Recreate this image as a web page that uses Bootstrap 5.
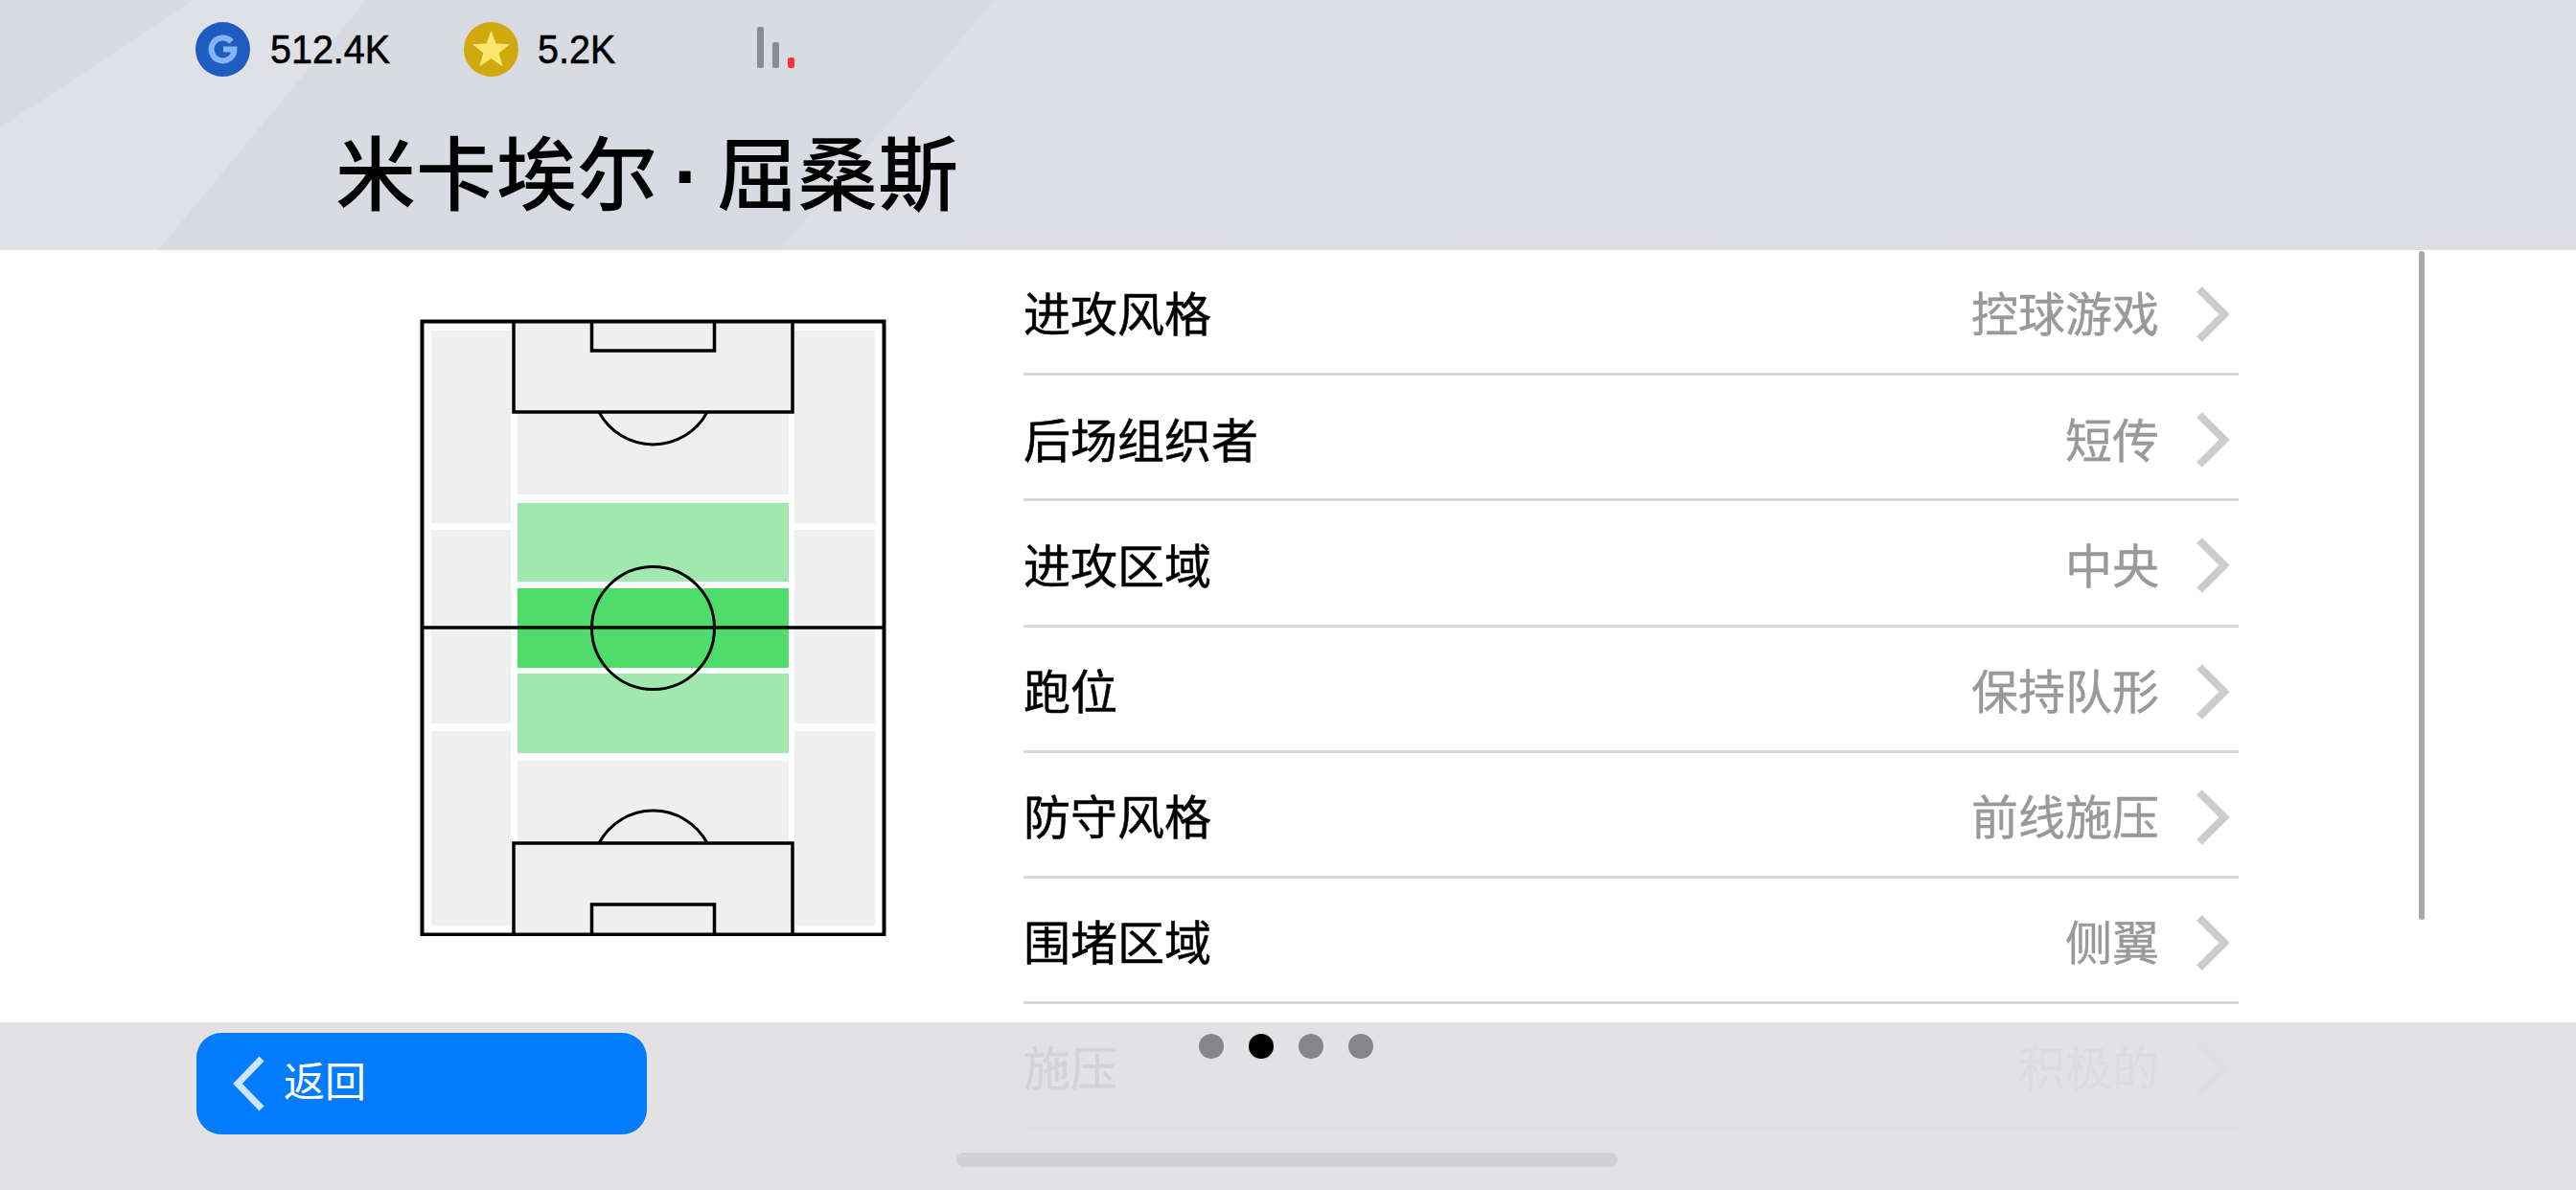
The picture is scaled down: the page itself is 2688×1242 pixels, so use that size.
<!DOCTYPE html>
<html lang="zh">
<head>
<meta charset="utf-8">
<title>米卡埃尔·屈桑斯</title>
<link href="https://cdn.jsdelivr.net/npm/bootstrap@5.3.0/dist/css/bootstrap.min.css" rel="stylesheet">
<style>
html,body{margin:0;height:1242px;overflow:hidden;background:#fff}
body{font-family:"Liberation Sans","Noto Sans CJK SC",sans-serif;color:#000}
.cjk{font-family:"Noto Sans CJK SC",sans-serif}
.screen{width:2688px;height:1242px;position:relative;overflow:hidden}
.topband{height:261px;background:linear-gradient(to bottom,#dedee7 0,#dedee7 240px,#dddee2 255px);position:relative;overflow:hidden}
.topband::before{content:"";position:absolute;inset:0;background:#d9dbe3;clip-path:polygon(0 0,1038px 0,814px 261px,0 261px)}
.topband::after{content:"";position:absolute;inset:0;background:#e0e1e6;clip-path:polygon(203px 0,382px 0,165px 261px,0 261px,0 133px)}
.topinner{position:relative;z-index:1;padding:23px 0 0 204px}
.stat-row{height:57px}
.coin{width:57px;height:57px;flex:none}
.stat-num{display:block;font-size:42px;line-height:57px;transform:scaleX(.94);transform-origin:left center;font-family:"Liberation Sans",sans-serif;-webkit-text-stroke:.6px #000}
.stat-a{width:280px;gap:21px}
.stat-b{width:306px;gap:20px}
.sig{height:43px;gap:9px;margin-top:5px}
.sig i{display:block;width:7px;border-radius:2px;background:#8b8c90}
.sig i:nth-child(1){height:43px}
.sig i:nth-child(2){height:27px}
.sig i:nth-child(3){height:11px;background:#f33}
.player{font-size:84px;line-height:100px;margin:47px 0 0 146px;font-weight:500;white-space:nowrap}
.namedot{display:inline-block;width:62px;text-align:center;font-family:"Liberation Sans",sans-serif;font-weight:700}
.bodyarea{height:806px}
.pitchcol{width:1068px;flex:none;padding:71px 0 0 438px}
.pitchcol svg{display:block}
.rows{width:1268px;flex:none}
.rowline{height:131.2px;border-bottom:3px solid #d9d9d9;font-size:49px}
.rowlabel{-webkit-text-stroke:.5px #000}
.rowval{color:#999;margin-left:auto;margin-right:37px;-webkit-text-stroke:.4px #999}
.rowline svg{margin:6px 10px 0 0;flex:none}
.scrolly{position:absolute;left:2524px;top:262px;width:6px;height:698px;background:#a8a8a8;border-radius:3px}
.bottombar{position:absolute;left:0;right:0;top:1067px;height:175px;background:rgba(224,224,227,.94)}
.backbtn{position:absolute;left:205px;top:11px;width:470px;height:106px;background:#047cff;border:0;border-radius:26px;color:#fff;font-size:43px;padding:0 0 0 38px;gap:19px}
.backbtn span{padding-bottom:9px}
.dots{position:absolute;left:1251px;top:12px;gap:26px}
.dots span{display:block;width:26px;height:26px;border-radius:50%;background:#85858a}
.dots span.on{background:#000}
.homebar{position:absolute;left:998px;top:136px;width:690px;height:15px;border-radius:8px;background:#d2d2d5}
</style>
</head>
<body>
<div class="screen cjk">
  <header class="topband">
    <div class="topinner">
      <div class="d-flex stat-row">
        <div class="d-flex stat-a">
          <svg class="coin" viewBox="0 0 57 57"><circle cx="28.5" cy="28.5" r="28.5" fill="#1f5cc0"/><path d="M37.5 20.5a12 12 0 1 0 3 8H29" fill="none" stroke="#85b4f8" stroke-width="6"/></svg>
          <span class="stat-num">512.4K</span>
        </div>
        <div class="d-flex stat-b">
          <svg class="coin" viewBox="0 0 57 57"><circle cx="28.5" cy="28.5" r="28.5" fill="#d0a90f"/><polygon points="28.5,9 33.6,22.6 48,23.2 36.7,32.3 40.6,46.3 28.5,38.3 16.4,46.3 20.3,32.3 9,23.2 23.4,22.6" fill="#fbe66f"/></svg>
          <span class="stat-num">5.2K</span>
        </div>
        <div class="d-flex align-items-end sig"><i></i><i></i><i></i></div>
      </div>
      <h1 class="player">米卡埃尔<span class="namedot">·</span>屈桑斯</h1>
    </div>
  </header>
  <main class="d-flex bodyarea">
    <div class="pitchcol">
      <svg width="487" height="645" viewBox="438 332 487 645">
        <g fill="#efefef">
          <rect x="450" y="345" width="83" height="201"/><rect x="450" y="553" width="83" height="202"/><rect x="450" y="763" width="83" height="203"/>
          <rect x="829" y="345" width="84" height="201"/><rect x="829" y="553" width="84" height="202"/><rect x="829" y="763" width="84" height="203"/>
          <rect x="540" y="345" width="283" height="171"/><rect x="540" y="794" width="283" height="172"/>
          <rect x="536" y="336" width="291" height="94"/><rect x="536" y="880" width="291" height="95"/>
        </g>
        <rect x="540" y="525" width="283" height="82" fill="#a0e8ae"/>
        <rect x="540" y="614" width="283" height="83" fill="#4fdc6a"/>
        <rect x="540" y="703" width="283" height="83" fill="#a0e8ae"/>
        <g fill="none" stroke="#000">
          <circle cx="681.5" cy="655.5" r="64" stroke-width="3"/>
          <path d="M625 430a64 64 0 0 0 113 0M625 880a64 64 0 0 1 113 0" stroke-width="3"/>
          <path d="M440 655H923" stroke-width="3.5"/>
          <rect x="440.5" y="335.5" width="482" height="640" stroke-width="4"/>
          <path d="M536 336V430H827V336M536 975V880H827V975M617.5 336V366H745.5V336M617.5 975V944H745.5V975" stroke-width="3.5"/>
        </g>
      </svg>
    </div>
    <section class="rows">
      <div class="d-flex align-items-center rowline"><span class="rowlabel">进攻风格</span><span class="rowval">控球游戏</span><svg width="36" height="58" viewBox="0 0 36 58"><path d="M5 3 31 29 5 55" fill="none" stroke="#ccc" stroke-width="8"/></svg></div>
      <div class="d-flex align-items-center rowline"><span class="rowlabel">后场组织者</span><span class="rowval">短传</span><svg width="36" height="58" viewBox="0 0 36 58"><path d="M5 3 31 29 5 55" fill="none" stroke="#ccc" stroke-width="8"/></svg></div>
      <div class="d-flex align-items-center rowline"><span class="rowlabel">进攻区域</span><span class="rowval">中央</span><svg width="36" height="58" viewBox="0 0 36 58"><path d="M5 3 31 29 5 55" fill="none" stroke="#ccc" stroke-width="8"/></svg></div>
      <div class="d-flex align-items-center rowline"><span class="rowlabel">跑位</span><span class="rowval">保持队形</span><svg width="36" height="58" viewBox="0 0 36 58"><path d="M5 3 31 29 5 55" fill="none" stroke="#ccc" stroke-width="8"/></svg></div>
      <div class="d-flex align-items-center rowline"><span class="rowlabel">防守风格</span><span class="rowval">前线施压</span><svg width="36" height="58" viewBox="0 0 36 58"><path d="M5 3 31 29 5 55" fill="none" stroke="#ccc" stroke-width="8"/></svg></div>
      <div class="d-flex align-items-center rowline"><span class="rowlabel">围堵区域</span><span class="rowval">侧翼</span><svg width="36" height="58" viewBox="0 0 36 58"><path d="M5 3 31 29 5 55" fill="none" stroke="#ccc" stroke-width="8"/></svg></div>
      <div class="d-flex align-items-center rowline"><span class="rowlabel">施压</span><span class="rowval">积极的</span><svg width="36" height="58" viewBox="0 0 36 58"><path d="M5 3 31 29 5 55" fill="none" stroke="#ccc" stroke-width="8"/></svg></div>
    </section>
  </main>
  <div class="scrolly"></div>
  <footer class="bottombar">
    <button class="btn backbtn d-flex align-items-center" type="button"><svg width="34" height="58" viewBox="0 0 34 58"><path d="M30 3 5 29 30 55" fill="none" stroke="#cfe4ff" stroke-width="7"/></svg><span>返回</span></button>
    <div class="d-flex dots"><span></span><span class="on"></span><span></span><span></span></div>
    <div class="homebar"></div>
  </footer>
</div>
<script src="https://cdn.jsdelivr.net/npm/bootstrap@5.3.0/dist/js/bootstrap.bundle.min.js"></script>
</body>
</html>
